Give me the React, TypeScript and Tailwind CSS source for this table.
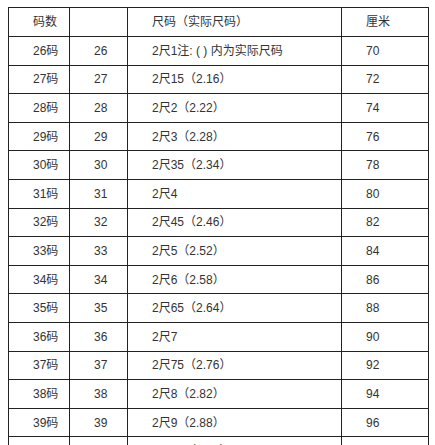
import React from "react";

const rows = [
  ["26码", "26", "2尺1注: ( ) 内为实际尺码", "70"],
  ["27码", "27", "2尺15（2.16）", "72"],
  ["28码", "28", "2尺2（2.22）", "74"],
  ["29码", "29", "2尺3（2.28）", "76"],
  ["30码", "30", "2尺35（2.34）", "78"],
  ["31码", "31", "2尺4", "80"],
  ["32码", "32", "2尺45（2.46）", "82"],
  ["33码", "33", "2尺5（2.52）", "84"],
  ["34码", "34", "2尺6（2.58）", "86"],
  ["35码", "35", "2尺65（2.64）", "88"],
  ["36码", "36", "2尺7", "90"],
  ["37码", "37", "2尺75（2.76）", "92"],
  ["38码", "38", "2尺8（2.82）", "94"],
  ["39码", "39", "2尺9（2.88）", "96"],
  ["40码", "40", "2尺95（2.94）", "98"],
];

const cell = "border border-[#222] pl-[24px] text-left align-middle whitespace-nowrap";

function App() {
  return (
    <div className="h-[445px] w-[435px] overflow-hidden bg-white pl-[8px] pt-[7px] font-['Liberation_Sans','Noto_Sans_CJK_SC',sans-serif] text-[12px] text-[#333]">
      <table className="w-[420px] table-fixed border-collapse">
        <colgroup>
          <col className="w-[61px]" />
          <col className="w-[58px]" />
          <col className="w-[214px]" />
          <col className="w-[87px]" />
        </colgroup>
        <tbody>
          <tr className="h-[29px]">
            <td className={cell}>码数</td>
            <td className={cell}></td>
            <td className={cell}>尺码（实际尺码）</td>
            <td className={cell}>厘米</td>
          </tr>
          {rows.map((r) => (
            <tr key={r[0]} className="h-[28.6px]">
              <td className={cell}>{r[0]}</td>
              <td className={cell}>{r[1]}</td>
              <td className={cell}>{r[2]}</td>
              <td className={cell}>{r[3]}</td>
            </tr>
          ))}
        </tbody>
      </table>
    </div>
  );
}

export default App;
